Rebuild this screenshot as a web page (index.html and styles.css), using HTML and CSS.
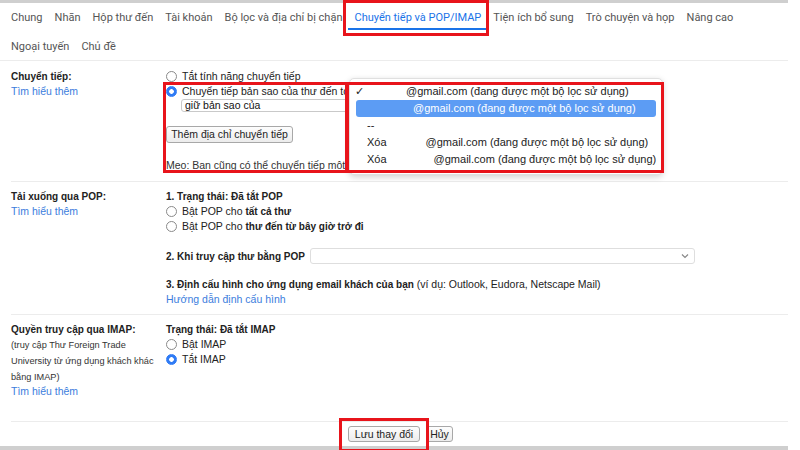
FILE: index.html
```html
<!DOCTYPE html>
<html lang="vi">
<head>
<meta charset="utf-8">
<title>Chuyển tiếp và POP/IMAP</title>
<link rel="stylesheet" href="styles.css">
</head>
<body>
<div class="page">
  <div class="graybar"></div>
  <nav class="tabs">
    <span class="tab">Chung</span>
    <span class="tab">Nhãn</span>
    <span class="tab">Hộp thư đến</span>
    <span class="tab">Tài khoản</span>
    <span class="tab">Bộ lọc và địa chỉ bị chặn</span>
    <span class="tab active">Chuyển tiếp và POP/IMAP</span>
    <span class="tab">Tiện ích bổ sung</span>
    <span class="tab">Trò chuyện và họp</span>
    <span class="tab">Nâng cao</span>
    <span class="break"></span>
    <span class="tab">Ngoại tuyến</span>
    <span class="tab">Chủ đề</span>
  </nav>

  <section class="sec sec-fwd">
    <div class="label">
      <div class="title">Chuyển tiếp:</div>
      <a class="link">Tìm hiểu thêm</a>
    </div>
    <div class="body">
      <div class="row"><span class="radio"></span>Tắt tính năng chuyển tiếp</div>
      <div class="row"><span class="radio on"></span>Chuyển tiếp bản sao của thư đến tớ</div>
      <div class="select keep"><span>giữ bản sao của</span></div>
      <button class="btn add">Thêm địa chỉ chuyển tiếp</button>
      <div class="tip">Mẹo: Bạn cũng có thể chuyển tiếp một</div>
    </div>
  </section>

  <section class="sec sec-pop">
    <div class="label">
      <div class="title">Tải xuống qua POP:</div>
      <a class="link">Tìm hiểu thêm</a>
    </div>
    <div class="body">
      <div class="row title">1. Trạng thái: Đã tắt POP</div>
      <div class="row"><span class="radio"></span>Bật POP cho&nbsp;<b>tất cả thư</b></div>
      <div class="row"><span class="radio"></span>Bật POP cho&nbsp;<b>thư đến từ bây giờ trở đi</b></div>
      <div class="row when"><b>2. Khi truy cập thư bằng POP</b>
        <div class="select pop">
          <svg class="chev" width="8" height="6" viewBox="0 0 8 6"><path d="M1 1.5 L4 4.5 L7 1.5" fill="none" stroke="#888" stroke-width="1.2"/></svg>
        </div>
      </div>
      <div class="row cfg"><b>3. Định cấu hình cho ứng dụng email khách của bạn</b>&nbsp;(ví dụ: Outlook, Eudora, Netscape Mail)</div>
      <div class="row"><a class="link">Hướng dẫn định cấu hình</a></div>
    </div>
  </section>

  <section class="sec sec-imap">
    <div class="label">
      <div class="title">Quyền truy cập qua IMAP:</div>
      <div class="note">(truy cập Thư Foreign Trade<br>University từ ứng dụng khách khác<br>bằng IMAP)</div>
      <a class="link tight">Tìm hiểu thêm</a>
    </div>
    <div class="body">
      <div class="row title">Trạng thái: Đã tắt IMAP</div>
      <div class="row"><span class="radio"></span>Bật IMAP</div>
      <div class="row"><span class="radio on"></span>Tắt IMAP</div>
    </div>
  </section>

  <footer class="actions">
    <button class="btn save">Lưu thay đổi</button>
    <button class="btn cancel">Hủy</button>
  </footer>
  <div class="graybar bottom"></div>

  <div class="menu">
    <div class="opt"><span class="check">✓</span><span class="mail m1">@gmail.com (đang được một bộ lọc sử dụng)</span></div>
    <div class="opt hl"><span class="mail m2">@gmail.com (đang được một bộ lọc sử dụng)</span></div>
    <div class="opt"><span class="lbl">--</span></div>
    <div class="opt"><span class="lbl">Xóa</span><span class="mail m4">@gmail.com (đang được một bộ lọc sử dụng)</span></div>
    <div class="opt"><span class="lbl">Xóa</span><span class="mail m5">@gmail.com (đang được một bộ lọc sử dụng)</span></div>
  </div>

  <div class="mark mark-tab"></div>
  <div class="mark mark-fwd"></div>
  <div class="mark mark-menu"></div>
  <div class="mark mark-save"></div>
</div>
</body>
</html>
```

FILE: styles.css
```css
* { box-sizing: border-box; }
html, body { margin: 0; padding: 0; background: #fff; }
body {
  font-family: "Liberation Sans", Arial, sans-serif;
  font-size: 10.5px;
  color: #222;
}
.page {
  position: relative;
  width: 788px;
  height: 450px;
  overflow: hidden;
}
.graybar { height: 3px; background: #cfcfcf; }
.graybar.bottom { height: 4px; }

/* tabs */
.tabs {
  display: flex;
  flex-wrap: wrap;
  column-gap: 12px;
  padding-left: 11px;
  border-bottom: 1px solid #ececec;
  height: 58px;
  font-family: Roboto, "Liberation Sans", sans-serif;
  font-size: 11px;
}
.tab {
  position: relative;
  line-height: 29px;
  height: 29px;
  color: #555;
  white-space: nowrap;
}
.tab.active { color: #1a73e8; }
.tab.active::after {
  content: "";
  position: absolute;
  left: -6px; right: -6px; bottom: 2px;
  height: 2px;
  background: #1a73e8;
}
.break { flex-basis: 100%; height: 0; }

/* sections */
.sec {
  display: grid;
  grid-template-columns: 155px 1fr;
  margin-left: 11px;
  border-top: 1px solid #ececec;
}
.tabs + .sec { border-top: none; }
.label { display: flex; flex-direction: column; align-items: flex-start; }
.title { font-weight: bold; font-size: 10px; line-height: 15px; }
.link { color: #3b7ddd; line-height: 15px; text-decoration: none; }
.body { display: flex; flex-direction: column; align-items: flex-start; }
.row {
  display: flex;
  align-items: center;
  height: 15px;
  line-height: 15px;
  white-space: nowrap;
}
.row b { font-weight: bold; font-size: 10px; }

.radio {
  width: 11px; height: 11px;
  border-radius: 50%;
  border: 1px solid #8a8a8a;
  background: #fff;
  margin-right: 5px;
  flex: none;
}
.radio.on {
  border-color: #2f7bf5;
  background: radial-gradient(circle, #fff 0 2px, #2f7bf5 2.6px);
}

.sec-fwd { padding: 8px 0 8px; }
.select {
  border: 1px solid #c9c9c9;
  border-radius: 3px;
  background: #fff;
}
.select.keep {
  margin-left: 15px;
  width: 169px;
  height: 13px;
  line-height: 11px;
  padding-left: 3px;
  color: #111;
}
.btn {
  font-family: "Liberation Sans", Arial, sans-serif;
  font-size: 10.5px;
  color: #222;
  background: linear-gradient(#fdfdfd, #ececec);
  border: 1px solid #a8a8a8;
  border-radius: 3px;
  padding: 0;
  height: 17px;
  line-height: 15px;
  white-space: nowrap;
}
.btn.add { margin-top: 14px; width: 127px; }
.tip {
  margin-top: 15px;
  line-height: 15px;
  height: 15px;
  white-space: nowrap;
  color: #333;
}

.sec-pop { padding: 7px 0 7px; }
.row.when { margin-top: 14px; height: 16px; }
.select.pop {
  margin-left: 5px;
  width: 385px;
  height: 16px;
  display: flex;
  align-items: center;
  justify-content: flex-end;
  padding-right: 5px;
  border-color: #dedede;
}
.row.cfg { margin-top: 13px; }

.sec-imap { padding: 7px 0 23px; }
.note { font-size: 9.2px; line-height: 16px; color: #333; white-space: nowrap; }
.link.tight { line-height: 13px; }

.actions {
  display: flex;
  justify-content: center;
  gap: 6px;
  margin-left: 11px;
  padding: 4px 0 4px 2px;
  border-top: 1px solid #ececec;
  height: 25px;
}
.btn.save { width: 72px; height: 16px; line-height: 14px; }
.btn.cancel { width: 27px; height: 16px; line-height: 14px; }

/* dropdown menu (overlay) */
.menu {
  position: absolute;
  left: 349px; top: 78px;
  width: 314px; height: 97px;
  background: #fff;
  border: 1px solid #e0e0e0;
  border-radius: 5px;
  box-shadow: 0 2px 6px rgba(0,0,0,.18);
  padding-top: 4px;
  z-index: 5;
  font-size: 11px;
}
.opt {
  position: relative;
  display: flex;
  align-items: center;
  height: 17px;
  line-height: 17px;
  color: #222;
  white-space: nowrap;
}
.opt.hl {
  margin: 0 6px;
  border-radius: 3px;
  background: #5c9cf4;
  color: #fff;
}
.check { position: absolute; left: 5px; }
.lbl { margin-left: 17px; }
.mail.m1 { margin-left: 56px; }
.mail.m2 { margin-left: 57px; }
.mail.m4 { margin-left: 39px; }
.mail.m5 { margin-left: 47px; }

/* red annotation boxes */
.mark {
  position: absolute;
  border: 3px solid #e8141b;
  z-index: 10;
  pointer-events: none;
}
.mark-tab { left: 343px; top: 0; width: 146px; height: 36px; }
.mark-fwd { left: 163px; top: 82px; width: 186px; height: 91px; }
.mark-menu { left: 345px; top: 82px; width: 319px; height: 91px; }
.mark-save { left: 339px; top: 418px; width: 90px; height: 34px; }
```
